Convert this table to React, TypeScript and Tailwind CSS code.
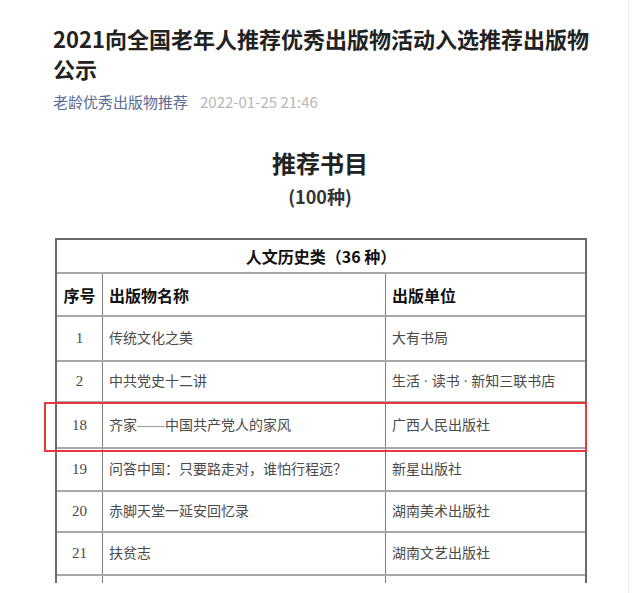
const rows = [
  { no: '1', title: '传统文化之美', pub: '大有书局', h: 'h-[45px]' },
  { no: '2', title: '中共党史十二讲', pub: '生活 · 读书 · 新知三联书店', h: 'h-[41px]' },
  { no: '18', title: '齐家——中国共产党人的家风', pub: '广西人民出版社', h: 'h-[46px]' },
  { no: '19', title: '问答中国：只要路走对，谁怕行程远？', pub: '新星出版社', h: 'h-[43px]' },
  { no: '20', title: '赤脚天堂一延安回忆录', pub: '湖南美术出版社', h: 'h-[41px]' },
  { no: '21', title: '扶贫志', pub: '湖南文艺出版社', h: 'h-[43px]' },
  { no: '', title: '', pub: '', h: 'h-[43px]' },
];

export default function App() {
  return (
    <div className="flex min-h-[593px] bg-white font-['Noto_Sans_CJK_SC',sans-serif]">
      <div className="w-[629px] border-r border-[#ededed]">
        <div className="pl-[53px] pt-[23px] w-[610px]">
          <h1 className="text-[22px] leading-[30px] font-bold text-[#222]">
            2021向全国老年人推荐优秀出版物活动入选推荐出版物
            <br />
            公示
          </h1>
          <div className="mt-[9px] flex items-center gap-3 text-[15px] leading-5">
            <span className="text-[#576b95]">老龄优秀出版物推荐</span>
            <span className="text-[#b8b8b8]">2022-01-25 21:46</span>
          </div>
        </div>

        <div className="mt-[35px] w-[640px] text-center">
          <div className="text-[24px] leading-8 font-bold text-[#222]">推荐书目</div>
          <div className="mt-[5px] text-[18px] leading-6 font-bold text-[#333]">(100种)</div>
        </div>

        <div className="relative mt-[30px] ml-[55px] w-[532px]">
          <div className="h-[345px] overflow-hidden">
            <div className="border-x-2 border-t-2 border-[#6a6a6a]">
              <div className="h-[34px] flex items-center justify-center border-b-2 border-[#a8a8a8] text-[16px] font-bold text-[#111]">
                人文历史类（36 种）
              </div>
              <div className="h-[43px] flex border-b-2 border-[#a8a8a8] text-[16px] font-bold text-[#111]">
                <div className="w-[46px] flex items-center justify-center border-r border-[#808080]">序号</div>
                <div className="w-[283px] flex items-center pl-[6px] border-r border-[#808080]">出版物名称</div>
                <div className="flex-1 flex items-center pl-[6px]">出版单位</div>
              </div>
              {rows.map((r, i) => (
                <div
                  key={i}
                  className={`${r.h} flex border-b-2 border-[#a8a8a8] text-[14px] text-[#4a4a4a] font-['Liberation_Serif','Noto_Sans_CJK_SC',serif]`}
                >
                  <div className="w-[46px] flex items-center justify-center border-r border-[#808080] text-[15px]">
                    {r.no}
                  </div>
                  <div className="w-[283px] flex items-center pl-[6px] border-r border-[#808080]">{r.title}</div>
                  <div className="flex-1 flex items-center pl-[6px]">{r.pub}</div>
                </div>
              ))}
            </div>
          </div>
          <div className="absolute left-[-11px] top-[164px] w-[543px] h-[50px] border-2 border-[#e8383d]" />
        </div>
      </div>
    </div>
  );
}
